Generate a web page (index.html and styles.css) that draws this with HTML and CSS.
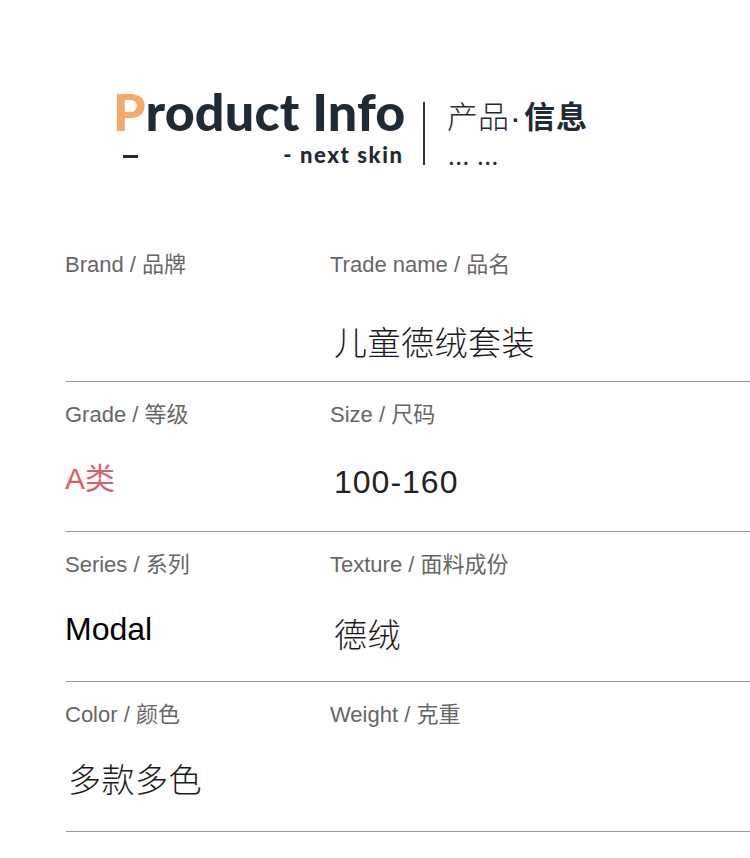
FILE: index.html
```html
<!DOCTYPE html>
<html lang="zh-CN">
<head>
<meta charset="utf-8">
<title>Product Info</title>
<link rel="stylesheet" href="styles.css">
</head>
<body>
<header class="head">
  <div class="head-left">
    <div class="title"><span class="title-p">P</span>roduct Info</div>
    <div class="sub">
      <span class="dash"></span>
      <span class="sub-text">- next skin</span>
    </div>
  </div>
  <div class="divider"></div>
  <div class="head-right">
    <div class="cn-title"><span class="cn-light">产品</span><span class="cn-dot">·</span><span class="cn-bold">信息</span></div>
    <div class="dots">... ...</div>
  </div>
</header>

<main class="table">
  <div class="row">
    <div class="cell">
      <div class="label">Brand / 品牌</div>
    </div>
    <div class="cell cell-right">
      <div class="label">Trade name / 品名</div>
      <div class="value value-cn v-r1">儿童德绒套装</div>
    </div>
  </div>
  <div class="row">
    <div class="cell">
      <div class="label">Grade / 等级</div>
      <div class="value value-red v-r2a">A类</div>
    </div>
    <div class="cell cell-right">
      <div class="label">Size / 尺码</div>
      <div class="value value-num v-r2b">100-160</div>
    </div>
  </div>
  <div class="row">
    <div class="cell">
      <div class="label">Series / 系列</div>
      <div class="value value-latin v-r3a">Modal</div>
    </div>
    <div class="cell cell-right">
      <div class="label">Texture / 面料成份</div>
      <div class="value value-cn v-r3b">德绒</div>
    </div>
  </div>
  <div class="row">
    <div class="cell">
      <div class="label">Color / 颜色</div>
      <div class="value value-cn value-indent v-r4">多款多色</div>
    </div>
    <div class="cell cell-right">
      <div class="label">Weight / 克重</div>
    </div>
  </div>
</main>
</body>
</html>
```

FILE: styles.css
```css
html, body {
  margin: 0;
  padding: 0;
  background: #ffffff;
}

body {
  width: 750px;
  font-family: "Liberation Sans", "Noto Sans CJK SC", sans-serif;
}

/* ---------- header ---------- */
.head {
  height: 232px;
  box-sizing: border-box;
  padding-top: 85px;
  padding-left: 113px;
  display: flex;
  align-items: flex-start;
}

.head-left {
  width: 289px;
}

.title {
  font-family: "Lato", "Liberation Sans", sans-serif;
  font-weight: 900;
  font-size: 52px;
  line-height: 52px;
  letter-spacing: 0.2px;
  color: #1f2a35;
  white-space: nowrap;
}

.title-p {
  color: #f4a86b;
}

.sub {
  margin-top: 7px;
  display: flex;
  justify-content: space-between;
  align-items: center;
  height: 22px;
}

.dash {
  display: block;
  width: 15px;
  height: 3px;
  margin-left: 10px;
  margin-top: 3px;
  background: #1f2a35;
}

.sub-text {
  font-family: "Lato", "Liberation Sans", sans-serif;
  font-weight: 900;
  font-size: 22px;
  line-height: 22px;
  letter-spacing: 1.6px;
  margin-right: -1.6px;
  color: #1f2a35;
  white-space: nowrap;
}

.divider {
  width: 2px;
  height: 63px;
  margin-top: 17px;
  margin-left: 21px;
  background: #2a323a;
}

.head-right {
  margin-left: 22px;
  margin-top: 14px;
}

.cn-title {
  font-family: "Noto Sans CJK SC", sans-serif;
  font-size: 31px;
  line-height: 31px;
  color: #1f2a35;
  white-space: nowrap;
}

.cn-light {
  font-weight: 300;
}

.cn-dot {
  font-family: "Liberation Sans", sans-serif;
  font-weight: 700;
  font-size: 24px;
  margin: 0 4px 0 3px;
}

.cn-bold {
  font-weight: 700;
  letter-spacing: 1px;
}

.dots {
  margin-top: 14px;
  padding-left: 2px;
  font-family: "Lato", "Liberation Sans", sans-serif;
  font-weight: 900;
  font-size: 20px;
  line-height: 16px;
  letter-spacing: 2.5px;
  color: #1f2a35;
}

/* ---------- table ---------- */
.table {
  margin-left: 66px;
}

.row {
  display: grid;
  grid-template-columns: 263px 1fr;
  height: 150px;
  box-sizing: border-box;
  border-bottom: 1px solid #9a9a9a;
}

.cell {
  padding-top: 20px;
  margin-left: -1px;
}

.cell-right {
  margin-left: 1px;
}

.label {
  font-size: 22px;
  line-height: 26px;
  color: #666666;
  font-weight: 400;
  white-space: nowrap;
}

.value {
  line-height: 40px;
  color: #1a1a1a;
  white-space: nowrap;
}

.cell-right .value {
  padding-left: 4px;
}

.value-cn {
  font-family: "Noto Sans CJK SC", sans-serif;
  font-weight: 300;
  font-size: 33px;
  letter-spacing: 0.5px;
}

.value-indent {
  padding-left: 3px;
}

.value-red {
  color: #d95f69;
  font-size: 30px;
}

.value-num {
  font-size: 32px;
  letter-spacing: 1px;
  color: #222;
}

.value-latin {
  font-size: 32px;
  color: #000;
}

.v-r1 { margin-top: 43px; }
.v-r2a { margin-top: 31px; }
.v-r2b { margin-top: 34px; }
.v-r3a { margin-top: 31px; }
.v-r3b { margin-top: 35px; }
.v-r4 { margin-top: 30px; }
```
